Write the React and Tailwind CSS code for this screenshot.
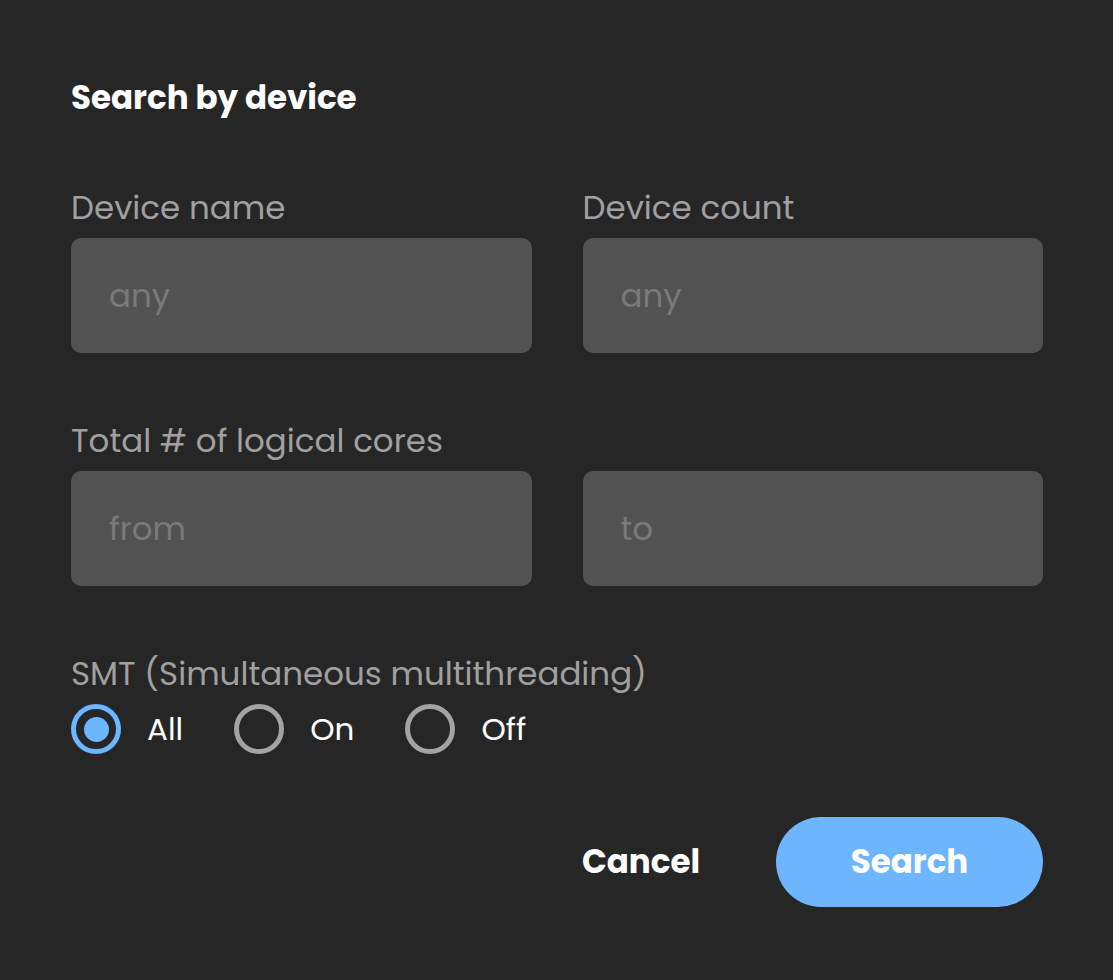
import React, { useState } from "react";

const font = { fontFamily: '"Poppins", "DejaVu Sans", sans-serif' };

function Field({ placeholder }) {
  return (
    <input
      type="text"
      placeholder={placeholder}
      className="h-[115px] w-full rounded-[10px] bg-[#525252] pl-[38px] text-[32.5px] text-white outline-none placeholder:text-[#7a7a7a]"
    />
  );
}

function Radio({ label, checked, onClick }) {
  return (
    <button type="button" onClick={onClick} className="flex items-center gap-[26px]">
      <span
        className={
          "flex h-[50px] w-[50px] items-center justify-center rounded-full border-[5px] " +
          (checked ? "border-[#6db5fe]" : "border-[#a3a3a3]")
        }
      >
        {checked && <span className="h-[25px] w-[25px] rounded-full bg-[#6db5fe]" />}
      </span>
      <span className="text-[31px] leading-[36px] text-white">{label}</span>
    </button>
  );
}

export default function App() {
  const [smt, setSmt] = useState("All");
  return (
    <div style={font} className="min-h-[980px] w-full bg-[#262626] pl-[71px] pr-[70px] pt-[80px]">
      <h1 className="text-[32.5px] font-bold leading-[36px] text-white">Search by device</h1>

      <div className="mt-[74px] grid grid-cols-2 gap-x-[51px]">
        <div className="flex flex-col gap-[12px]">
          <label className="text-[32.5px] leading-[36px] text-[#a0a0a0]">Device name</label>
          <Field placeholder="any" />
        </div>
        <div className="flex flex-col gap-[12px]">
          <label className="text-[32.5px] leading-[36px] text-[#a0a0a0]">Device count</label>
          <Field placeholder="any" />
        </div>
      </div>

      <div className="mt-[70px] flex flex-col gap-[12px]">
        <label className="text-[32.5px] leading-[36px] text-[#a0a0a0]">Total # of logical cores</label>
        <div className="grid grid-cols-2 gap-x-[51px]">
          <Field placeholder="from" />
          <Field placeholder="to" />
        </div>
      </div>

      <div className="mt-[70px] flex flex-col gap-[12px]">
        <label className="text-[32.5px] leading-[36px] text-[#a0a0a0]">
          SMT (Simultaneous multithreading)
        </label>
        <div className="flex items-center gap-[51px]">
          {["All", "On", "Off"].map((o) => (
            <Radio key={o} label={o} checked={smt === o} onClick={() => setSmt(o)} />
          ))}
        </div>
      </div>

      <div className="mt-[63px] flex items-center justify-end gap-[76px]">
        <button type="button" className="text-[32.5px] font-bold text-white">
          Cancel
        </button>
        <button
          type="button"
          className="h-[90px] w-[267px] rounded-full bg-[#6db5fe] text-[32.5px] font-bold text-white"
        >
          Search
        </button>
      </div>
    </div>
  );
}
